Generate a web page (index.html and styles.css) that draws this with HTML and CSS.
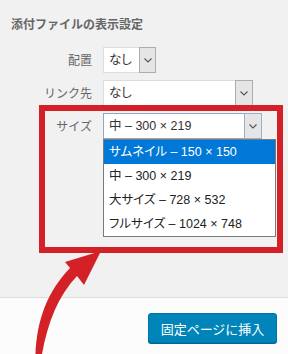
FILE: index.html
```html
<!DOCTYPE html>
<html lang="ja">
<head>
    <meta charset="UTF-8">
    <meta name="viewport" content="width=device-width, initial-scale=1.0">
    <title>添付ファイルの表示設定</title>
    <link rel="stylesheet" href="styles.css">
</head>
<body>
    <div class="modal">
        <div class="settings">
            <h2 class="settings-title">添付ファイルの表示設定</h2>

            <div class="setting-rows">
                <span class="setting-label">配置</span>
                <div class="select select-align">
                    <span class="select-value">なし</span>
                    <span class="select-btn">
                        <svg width="8" height="5" viewBox="0 0 8 5"><polyline points="0.5,0.5 4,4 7.5,0.5" /></svg>
                    </span>
                </div>

                <span class="setting-label">リンク先</span>
                <div class="select select-link">
                    <span class="select-value">なし</span>
                    <span class="select-btn">
                        <svg width="8" height="5" viewBox="0 0 8 5"><polyline points="0.5,0.5 4,4 7.5,0.5" /></svg>
                    </span>
                </div>

                <span class="setting-label">サイズ</span>
                <div class="select select-size is-open">
                    <span class="select-value">中 – 300 × 219</span>
                    <span class="select-btn">
                        <svg width="8" height="5" viewBox="0 0 8 5"><polyline points="0.5,0.5 4,4 7.5,0.5" /></svg>
                    </span>
                    <ul class="dropdown">
                        <li class="option selected">サムネイル – 150 × 150</li>
                        <li class="option">中 – 300 × 219</li>
                        <li class="option">大サイズ – 728 × 532</li>
                        <li class="option">フルサイズ – 1024 × 748</li>
                    </ul>
                </div>
            </div>
        </div>

        <div class="toolbar">
            <button class="insert-btn">固定ページに挿入</button>
        </div>

        <!-- annotation: red frame + arrow -->
        <div class="callout"></div>
        <svg class="callout-arrow" width="80" height="110" viewBox="30 245 80 110">
            <path d="M35.5 354 C37 320 47 292 70 268 L65 262 L101 251 L84 285 L77 276 C58 296 48 322 42 354 Z" />
        </svg>
    </div>
</body>
</html>
```

FILE: styles.css
```css
* {
    margin: 0;
    padding: 0;
    box-sizing: border-box;
}

body {
    font-family: "Noto Sans", "Noto Sans CJK JP", sans-serif;
    background: #fcfcfc;
    color: #333;
}

.modal {
    position: relative;
    width: 288px;
    height: 354px;
    overflow: hidden;
}

.settings {
    height: 298px;
    background: #f1f1f1;
    border-bottom: 1px solid #dddddd;
    padding-top: 16px;
}

.settings-title {
    font-size: 12px;
    line-height: 18px;
    font-weight: bold;
    color: #666;
    padding-left: 11px;
}

.setting-rows {
    display: grid;
    grid-template-columns: 92px max-content;
    grid-auto-rows: 26px;
    column-gap: 11px;
    row-gap: 7px;
    margin-top: 13px;
    align-items: center;
}

.setting-label {
    text-align: right;
    font-size: 12px;
    color: #666;
}

.select {
    position: relative;
    display: flex;
    height: 26px;
    background: #fff;
    border: 1px solid #dddddd;
}

.select-align { width: 53px; }
.select-link { width: 150px; }
.select-size { width: 159px; border-color: #8fa8c8; }

.select-value {
    flex: 1;
    padding-left: 5px;
    font-family: "Liberation Sans", "Noto Sans CJK JP", sans-serif;
    font-size: 12.5px;
    font-feature-settings: "palt";
    line-height: 24px;
    color: #333;
    white-space: nowrap;
}

.select-btn {
    width: 18px;
    margin: -1px -1px -1px 0;
    background: #e5e5e5;
    border: 1px solid #acacac;
    display: flex;
    align-items: center;
    justify-content: center;
}

.select-align .select-btn { width: 17px; }
.select-size .select-btn { border-color: #98b0d0; }

.select-btn svg polyline {
    fill: none;
    stroke: #555;
    stroke-width: 1.1;
}

.dropdown {
    position: absolute;
    top: 100%;
    left: -1px;
    width: 173px;
    margin-top: 1px;
    list-style: none;
    background: #fff;
    border: 1px solid #7a7a7a;
    z-index: 2;
}

.option {
    height: 24px;
    padding-left: 5px;
    font-family: "Liberation Sans", "Noto Sans CJK JP", sans-serif;
    font-size: 12.5px;
    font-feature-settings: "palt";
    line-height: 24px;
    color: #222;
    white-space: nowrap;
}

.option.selected {
    background: #0078d7;
    color: #fff;
}

.toolbar {
    display: flex;
    justify-content: flex-end;
    padding: 15px 11px 0 0;
}

.insert-btn {
    height: 30px;
    width: 129px;
    background: #0085ba;
    border: 1px solid #0073aa;
    border-radius: 3px;
    color: #fff;
    font-family: "Noto Sans CJK JP", sans-serif;
    font-size: 13px;
    box-shadow: 0 1px 0 #006799;
}

.callout {
    position: absolute;
    left: 39px;
    top: 105px;
    width: 244px;
    height: 148px;
    border: 6px solid #d42127;
    z-index: 3;
}

.callout-arrow {
    position: absolute;
    left: 30px;
    top: 245px;
    z-index: 3;
}

.callout-arrow path {
    fill: #d42127;
}
```
